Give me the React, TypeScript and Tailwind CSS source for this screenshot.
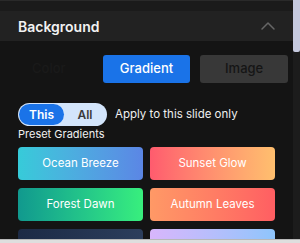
import { ChevronUp } from "lucide-react";

const presets = [
  { name: "Ocean Breeze", bg: "bg-gradient-to-r from-[#36cbd9] to-[#5b86e5]" },
  { name: "Sunset Glow", bg: "bg-gradient-to-r from-[#ff5b6e] to-[#ffbf6e]" },
  { name: "Forest Dawn", bg: "bg-gradient-to-r from-[#11998e] to-[#38ef7d]" },
  { name: "Autumn Leaves", bg: "bg-gradient-to-r from-[#ff9966] to-[#ff5e62]" },
  // bottom row is scrolled out of view, only the top edge shows
  { name: "", bg: "bg-gradient-to-r from-[#1c2a45] to-[#2c3e5c]" },
  { name: "", bg: "bg-gradient-to-r from-[#d8b6fc] to-[#8ec5fc]" },
];

export default function App() {
  return (
    <div className="flex h-[243px] w-[300px] flex-col overflow-hidden bg-[#141414] font-['Inter',sans-serif]">
      <div className="flex min-h-0 flex-1 overflow-hidden">
        <div className="flex min-w-0 flex-1 flex-col">
          <div className="h-[11px] shrink-0 border-t border-[#2a2a2a] bg-[#1b1b1b]" />
          <div className="flex h-[30px] shrink-0 items-center justify-between bg-[#222222] pl-[18px] pr-[13px]">
            <span className="text-[14px] font-semibold text-[#f2f2f2]">Background</span>
            <ChevronUp size={24} strokeWidth={1.5} className="text-[#666666]" />
          </div>

          <div className="mt-[14px] grid shrink-0 grid-cols-3 gap-[10px] px-[5px]">
            <button className="h-[28px] rounded-[3px] text-[13px] font-medium text-[#1a1a1a]">Color</button>
            <button className="h-[28px] rounded-[3px] bg-[#1a73e8] text-[13px] font-medium text-white">
              Gradient
            </button>
            <button className="h-[28px] rounded-[3px] bg-[#383838] text-[13px] font-medium text-[#151515]">
              Image
            </button>
          </div>

          <div className="mt-[20px] flex shrink-0 items-center pl-[18px]">
            <div className="flex h-[23px] w-[89px] items-center rounded-full bg-[#d3e5fb] p-[1px]">
              <span className="flex h-full w-[45px] items-center justify-center rounded-full bg-[#1a73e8] text-[12px] font-semibold text-white">
                This
              </span>
              <span className="flex-1 text-center text-[12px] font-semibold text-[#3a3a3a]">All</span>
            </div>
            <span className="ml-[8px] text-[11.5px] text-[#f0f0f0]">Apply to this slide only</span>
          </div>

          <div className="mt-[1px] shrink-0 pl-[18px] text-[11px] leading-[14px] text-[#f0f0f0]">Preset Gradients</div>

          <div className="ml-[18px] mt-[6px] grid w-[257px] shrink-0 grid-cols-2 gap-x-[7px] gap-y-[8px]">
            {presets.map((p, i) => (
              <div
                key={i}
                className={`flex h-[33px] items-center justify-center rounded-[4px] text-[11.5px] text-white ${p.bg}`}
              >
                {p.name}
              </div>
            ))}
          </div>
        </div>
        <div className="w-[7px] shrink-0 bg-[#1c1c1c]">
          <div className="h-[52px] rounded-b-[2px] bg-[#c6cadf]" />
        </div>
      </div>
      <div className="h-[4px] shrink-0 border-t border-[#b8b8b8] bg-[#dedede]" />
    </div>
  );
}
